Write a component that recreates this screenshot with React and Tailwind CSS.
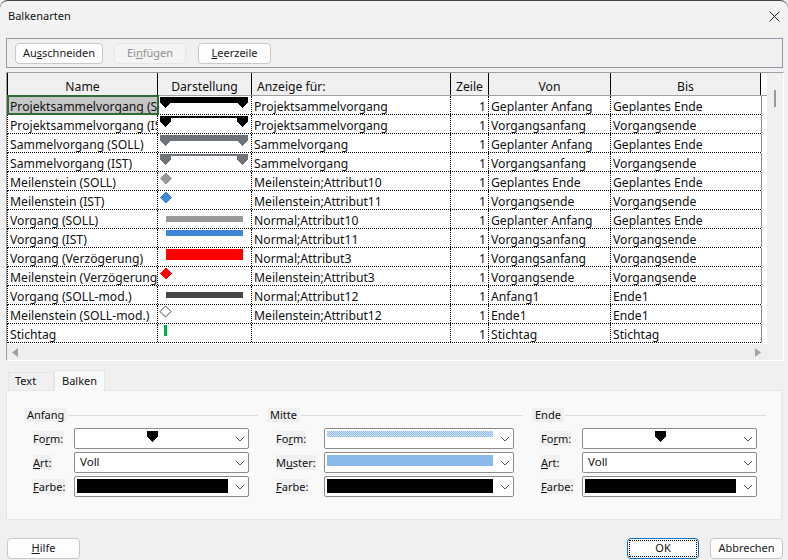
const rows = [
  ["Projektsammelvorgang (SOLL)", "Projektsammelvorgang", "Geplanter Anfang", "Geplantes Ende", "sumThick"],
  ["Projektsammelvorgang (IST)", "Projektsammelvorgang", "Vorgangsanfang", "Vorgangsende", "sumThin"],
  ["Sammelvorgang (SOLL)", "Sammelvorgang", "Geplanter Anfang", "Geplantes Ende", "graySumThick"],
  ["Sammelvorgang (IST)", "Sammelvorgang", "Vorgangsanfang", "Vorgangsende", "graySumThin"],
  ["Meilenstein (SOLL)", "Meilenstein;Attribut10", "Geplantes Ende", "Geplantes Ende", "diaGray"],
  ["Meilenstein (IST)", "Meilenstein;Attribut11", "Vorgangsende", "Vorgangsende", "diaBlue"],
  ["Vorgang (SOLL)", "Normal;Attribut10", "Geplanter Anfang", "Geplantes Ende", "barGray"],
  ["Vorgang (IST)", "Normal;Attribut11", "Vorgangsanfang", "Vorgangsende", "barBlue"],
  ["Vorgang (Verzögerung)", "Normal;Attribut3", "Vorgangsanfang", "Vorgangsende", "barRed"],
  ["Meilenstein (Verzögerung)", "Meilenstein;Attribut3", "Vorgangsende", "Vorgangsende", "diaRed"],
  ["Vorgang (SOLL-mod.)", "Normal;Attribut12", "Anfang1", "Ende1", "barDark"],
  ["Meilenstein (SOLL-mod.)", "Meilenstein;Attribut12", "Ende1", "Ende1", "diaOutline"],
  ["Stichtag", "", "Stichtag", "Stichtag", "mark"],
];

function Cap({ x, fill }) {
  // pentagon end of a summary bar, 11px wide
  return <path d={`M${x} 1h11v6l-5.5 5l-5.5 -5z`} fill={fill} />;
}

function Diamond({ fill }) {
  return <path d="M7.5 0.5l6 6l-6 6l-6 -6z" fill={fill} />;
}

function BarPreview({ kind }) {
  const sum = (h, fill) => (
    <>
      <rect x="2" y="1" width="88" height={h} fill={fill} />
      <Cap x={2} fill={fill} />
      <Cap x={79} fill={fill} />
    </>
  );
  return (
    <svg width="93" height="18" className="block" shapeRendering="crispEdges">
      {kind === "sumThick" && sum(6, "#000")}
      {kind === "sumThin" && sum(2, "#000")}
      {kind === "graySumThick" && sum(6, "#6f7278")}
      {kind === "graySumThin" && sum(2, "#6f7278")}
      {kind === "diaGray" && <Diamond fill="#999" />}
      {kind === "diaBlue" && <Diamond fill="#3f87d6" />}
      {kind === "diaRed" && <Diamond fill="#f00" />}
      {kind === "diaOutline" && (
        <path d="M7.5 1l5.5 5.5l-5.5 5.5l-5.5 -5.5z" fill="#fff" stroke="#444" shapeRendering="geometricPrecision" />
      )}
      {kind === "barGray" && <rect x="8" y="6" width="77" height="6" fill="#999" />}
      {kind === "barBlue" && <rect x="8" y="1" width="77" height="6" fill="#3f87d6" />}
      {kind === "barRed" && <rect x="8" y="1" width="77" height="11" fill="#f00" />}
      {kind === "barDark" && <rect x="8" y="6" width="77" height="6" fill="#464646" />}
      {kind === "mark" && <rect x="6" y="1" width="3" height="11" fill="#00b050" />}
    </svg>
  );
}

function Header({ w, left, children, last }) {
  return (
    <div className={`${w} h-[22px] shrink-0 flex items-end text-[12.2px] leading-[16px] text-[#111] border-l border-black ${left ? "justify-start pl-[5px]" : "justify-center"} ${last ? "border-r" : ""}`}>
      {children}
    </div>
  );
}

function Cell({ w, children, right, className = "" }) {
  return (
    <div className={`${w} h-full shrink-0 overflow-hidden whitespace-nowrap border-r border-dotted border-black px-[2px] pt-[2px] leading-[17px] ${right ? "text-right" : ""} ${className}`}>
      {children}
    </div>
  );
}

function Button({ children, className = "", disabled }) {
  return (
    <div className={`h-[21px] flex items-center justify-center rounded-[4px] border text-[11px] ${disabled ? "border-[#e6e6e6] bg-[#f4f4f4] text-[#8f8f8f]" : "border-[#c9c9c9] bg-[#fdfdfd] text-[#1a1a1a]"} ${className}`}>
      {children}
    </div>
  );
}

function Chevron() {
  return (
    <svg width="10" height="6" viewBox="0 0 10 6" className="shrink-0">
      <path d="M1 1l4 4l4 -4" fill="none" stroke="#555" strokeWidth="1" />
    </svg>
  );
}

function Combo({ w, children }) {
  return (
    <div className={`${w} h-[21px] flex items-center rounded-[2px] border border-[#8b8b8b] bg-white pr-[3px]`}>
      <div className="flex-1 h-full min-w-0 pl-[2px] pt-[2px] pb-[3px]">{children}</div>
      <div className="ml-[7px]"><Chevron /></div>
    </div>
  );
}

function CapIcon() {
  return (
    <svg width="11" height="11" className="block" shapeRendering="crispEdges">
      <path d="M0 0h11v6l-5.5 5l-5.5 -5z" fill="#000" />
    </svg>
  );
}

function DitherBar() {
  return (
    <svg width="166" height="6" className="block" shapeRendering="crispEdges">
      <defs>
        <pattern id="dither" width="2" height="2" patternUnits="userSpaceOnUse">
          <rect width="2" height="2" fill="#d5e6f8" />
          <rect width="1" height="1" fill="#8ab9ea" />
          <rect x="1" y="1" width="1" height="1" fill="#8ab9ea" />
        </pattern>
      </defs>
      <rect width="166" height="6" fill="url(#dither)" />
    </svg>
  );
}

function FieldRow({ label, labelW, comboW, children }) {
  return (
    <div className="flex items-center h-[21px]">
      <div className={`${labelW} shrink-0 pt-px text-[11px]`}>
        <span className="bg-[#f0f0f0]">{label}</span>
      </div>
      <Combo w={comboW}>{children}</Combo>
    </div>
  );
}

function Group({ title, w, gap, labelW, comboW, middle }) {
  return (
    <div className={`${w} shrink-0 ${gap}`}>
      <div className="flex items-center h-[14px]">
        <span className="bg-[#f0f0f0] px-[3px] text-[11px] leading-[14px]">{title}</span>
        <div className="flex-1 h-px bg-[#dcdcdc] ml-[1px]" />
      </div>
      <div className="mt-[6px] ml-[9px] flex flex-col gap-[3px]">
        <FieldRow label={<>Fo<u>r</u>m:</>} labelW={labelW} comboW={comboW}>
          {middle ? <DitherBar /> : <div className="flex justify-center"><CapIcon /></div>}
        </FieldRow>
        <FieldRow label={middle ? <>M<u>u</u>ster:</> : <><u>A</u>rt:</>} labelW={labelW} comboW={comboW}>
          {middle ? <div className="h-[11px] bg-[#8ab9ea]" /> : <div className="pl-[3px] text-[11.5px] leading-[14px]">Voll</div>}
        </FieldRow>
        <FieldRow label={<><u>F</u>arbe:</>} labelW={labelW} comboW={comboW}>
          <div className="h-full bg-black" />
        </FieldRow>
      </div>
    </div>
  );
}

export default function App() {
  return (
    <div className="w-[788px] h-[560px] overflow-hidden bg-[#f0f0f0] text-[#111] text-[12.2px]" style={{ fontFamily: '"Noto Sans", sans-serif' }}>
      <div className="h-[31px] flex items-center justify-between bg-[#f3f3f3] border-t border-[#444] rounded-t-[8px] pl-[8px] pr-[8px]">
        <span className="text-[11px]">Balkenarten</span>
        <svg width="11" height="11" viewBox="0 0 11 11"><path d="M.5.5l10 10M10.5.5l-10 10" stroke="#222" fill="none" /></svg>
      </div>

      <div className="ml-[6px] mt-[7px] w-[777px] h-[30px] flex items-center border border-[#8f9aa5] bg-[#f0f0f0] pl-[8px]">
        <Button className="w-[88px]">Au<u>s</u>schneiden</Button>
        <Button className="w-[72px] ml-[11px]" disabled>Ei<u>n</u>fügen</Button>
        <Button className="w-[73px] ml-[12px]"><u>L</u>eerzeile</Button>
      </div>

      <div className="ml-[6px] mt-[4px] w-[778px] border border-[#a0a0a0] border-r-white border-b-white flex">
        <div className="w-[760px] shrink-0">
          <div className="flex border-b border-[#a0a0a0] bg-[#f0f0f0]">
            <Header w="w-[150px]">Name</Header>
            <Header w="w-[94px]">Darstellung</Header>
            <Header w="w-[199px]" left>Anzeige für:</Header>
            <Header w="w-[38px]">Zeile</Header>
            <Header w="w-[122px]">Von</Header>
            <Header w="w-[151px]" last>Bis</Header>
            <div className="flex-1 bg-white" />
          </div>
          <div className="bg-white">
            {rows.map((r, i) => (
              <div key={r[0]} className="flex h-[19px] w-[754px] border-l border-l-black border-b border-dotted border-b-black">
                <Cell w="w-[150px]" className={i === 0 ? "bg-[#c6c6c6] outline-2 -outline-offset-1 outline-[#2f6b34]" : ""}>{r[0]}</Cell>
                <div className="w-[94px] h-full shrink-0 border-r border-dotted border-black overflow-hidden"><BarPreview kind={r[4]} /></div>
                <Cell w="w-[199px]">{r[1]}</Cell>
                <Cell w="w-[38px]" right>1</Cell>
                <Cell w="w-[122px]">{r[2]}</Cell>
                <Cell w="w-[151px]" className="border-solid border-r-[#8a8a8a]">{r[3]}</Cell>
              </div>
            ))}
          </div>
          <div className="h-[17px] flex items-center justify-between bg-[#eeeeee] pl-[5px] pr-[6px] border-t border-white">
            <svg width="6" height="9"><path d="M6 0v9L0 4.5z" fill="#a0a0a0" /></svg>
            <svg width="6" height="9"><path d="M0 0v9l6-4.5z" fill="#a6a6a6" /></svg>
          </div>
        </div>
        <div className="flex-1 flex justify-center pt-[17px]">
          <div className="w-[2px] h-[17px] bg-[#9a9a9a]" />
        </div>
      </div>

      <div className="ml-[8px] flex items-end h-[29px]">
        <div className="w-[46px] h-[18px] flex items-center pl-[6px] border border-b-0 border-[#e5e5e5] text-[11px]">Text</div>
        <div className="w-[51px] h-[21px] flex items-center pl-[7px] border border-b-0 border-[#e5e5e5] bg-[#f9f9f9] text-[11px] -mb-px relative z-10">Balken</div>
      </div>

      <div className="ml-[6px] w-[776px] h-[130px] border border-[#e5e5e5] bg-[#f9f9f9] flex pt-[17px] pl-[17px]">
        <Group title="Anfang" w="w-[234px]" gap="mr-[9px]" labelW="w-[41px]" comboW="w-[175px]" />
        <Group title="Mitte" w="w-[256px]" gap="mr-[9px]" labelW="w-[48px]" comboW="w-[190px]" middle />
        <Group title="Ende" w="w-[234px]" gap="" labelW="w-[41px]" comboW="w-[175px]" />
      </div>

      <div className="flex items-center mt-[18px] pl-[7px]">
        <Button className="w-[73px]"><u>H</u>ilfe</Button>
        <div className="flex-1" />
        <div className="w-[72px] h-[21px] rounded-[4px] border border-[#0a6cbd] bg-[#fdfdfd] p-px">
          <div className="h-full flex items-center justify-center border border-dotted border-black text-[11px]">OK</div>
        </div>
        <Button className="w-[73px] ml-[11px] mr-[5px]">Abbrechen</Button>
      </div>
    </div>
  );
}
